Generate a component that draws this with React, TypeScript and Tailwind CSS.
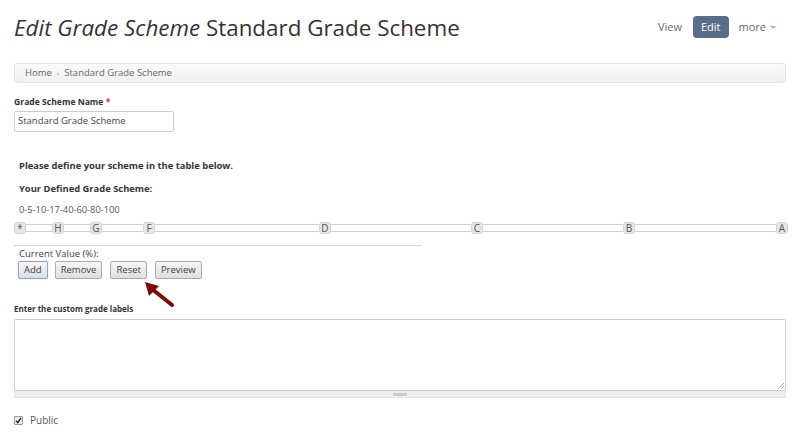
import React from 'react';

const font = { fontFamily: '"Open Sans", "Liberation Sans", sans-serif' };

const handles = [
    { label: '*', left: 14 },
    { label: 'H', left: 52 },
    { label: 'G', left: 90 },
    { label: 'F', left: 143 },
    { label: 'D', left: 319 },
    { label: 'C', left: 471 },
    { label: 'B', left: 623 },
    { label: 'A', left: 776 },
];

const Handle = ({ label }: { label: string }) => (
    <div className="w-[12px] h-[12px] shrink-0 rounded-[3px] border border-[#d3d3d3] bg-[#e6e6e6] flex items-center justify-center text-[10px] leading-none text-[#555]">
        {label}
    </div>
);

const Btn = ({ children, focused, className = '' }: { children: React.ReactNode; focused?: boolean; className?: string }) => (
    <button
        className={`h-[18px] px-[5px] text-[9.5px] leading-none text-[#444] rounded-[2px] bg-gradient-to-b from-[#f6f6f6] to-[#dedede] border ${
            focused ? 'border-[#7ea6dd] shadow-[0_0_1px_#8ab]' : 'border-[#aaa]'
        } ${className}`}
    >
        {children}
    </button>
);

export default function App() {
    // slider handle segments built from positions
    const segs: React.ReactNode[] = [];
    handles.forEach((h, i) => {
        segs.push(<Handle key={'h' + i} label={h.label} />);
        if (i < handles.length - 1) {
            const w = handles[i + 1].left - h.left - 12;
            segs.push(
                <div
                    key={'s' + i}
                    className="h-[8px] border-y border-[#cfcfcf] bg-white shrink-0"
                    style={{ width: w }}
                />
            );
        }
    });

    return (
        <div className="w-[800px] h-[434px] bg-white text-[#333] relative overflow-hidden" style={font}>
            {/* header */}
            <div className="flex items-center justify-between pl-[14px] pr-[24px] h-[56px]">
                <h1 className="text-[22.4px] leading-none text-[#333] pt-[1px]">
                    <em>Edit Grade Scheme</em> Standard Grade Scheme
                </h1>
                <div className="flex items-center text-[11px] pb-[2px]">
                    <span className="text-[#666] mr-[11px]">View</span>
                    <span className="bg-[#5b6b8c] text-white rounded-[4px] px-[8px] h-[22px] flex items-center">Edit</span>
                    <span className="text-[#666] ml-[10px]">more</span>
                    <span className="ml-[4px] border-x-[3px] border-x-transparent border-t-[3px] border-t-[#8ab4d8]" />
                </div>
            </div>

            {/* breadcrumb */}
            <div className="mx-[14px] mt-[7px] h-[20px] border border-[#e3e3e3] rounded-[3px] bg-gradient-to-b from-[#fafafa] to-[#f0f0f0] flex items-center pl-[10px] text-[9.5px] text-[#666]">
                <span>Home</span>
                <span className="mx-[5px] text-[8px] text-[#888]">›</span>
                <span>Standard Grade Scheme</span>
            </div>

            {/* name field */}
            <div className="px-[14px] mt-[13px]">
                <div className="text-[8.6px] font-bold text-[#333] leading-[12px]">
                    Grade Scheme Name <span className="text-[#c33]">*</span>
                </div>
                <div className="mt-[3px] w-[160px] h-[21px] border border-[#ccc] rounded-[2px] flex items-center px-[3px] text-[9.5px] text-[#444]">
                    Standard Grade Scheme
                </div>
            </div>

            {/* scheme section */}
            <div className="px-[19px] mt-[27px] text-[9.4px] font-bold text-[#333] leading-[14px]">
                Please define your scheme in the table below.
            </div>
            <div className="px-[19px] mt-[9px] text-[9.4px] font-bold text-[#333] leading-[14px]">
                Your Defined Grade Scheme:
            </div>
            <div className="px-[19px] mt-[8px] text-[9.3px] text-[#555] leading-[12px]">0-5-10-17-40-60-80-100</div>

            <div className="pl-[14px] mt-[6px] flex items-center h-[12px]">{segs}</div>

            <div className="ml-[14px] mt-[11px] w-[408px] border-t border-[#ddd]" />

            <div className="px-[19px] mt-[2px] text-[9.5px] text-[#444] leading-[12px]">Current Value (%):</div>
            <div className="pl-[18px] mt-[1px] flex items-center gap-[7px]">
                <Btn focused>Add</Btn>
                <Btn>Remove</Btn>
                <Btn className="ml-[1px]">Reset</Btn>
                <Btn className="ml-[1px]">Preview</Btn>
            </div>

            {/* arrow annotation */}
            <svg className="absolute left-[140px] top-[277px]" width="40" height="34" viewBox="0 0 40 34">
                <line x1="32" y1="28" x2="12" y2="12" stroke="#7d0a0a" strokeWidth="4" strokeLinecap="round" />
                <polygon points="5,5 19,9 9,19" fill="#7d0a0a" />
            </svg>

            {/* labels textarea */}
            <div className="px-[14px] mt-[24px]">
                <div className="text-[8px] font-bold text-[#333] leading-[12px]">Enter the custom grade labels</div>
                <div className="mt-[4px] relative h-[72px] border border-[#ccc] rounded-[2px] bg-white">
                    <svg className="absolute right-[1px] bottom-[1px]" width="7" height="7" viewBox="0 0 7 7">
                        <line x1="1" y1="7" x2="7" y2="1" stroke="#999" strokeWidth="0.8" />
                        <line x1="4" y1="7" x2="7" y2="4" stroke="#999" strokeWidth="0.8" />
                    </svg>
                </div>
                <div className="h-[7px] bg-[#eee] border-x border-b border-[#e2e2e2] flex items-center justify-center">
                    <div className="w-[14px] h-[3px] bg-[#ccc]" />
                </div>
            </div>

            {/* public */}
            <div className="px-[14px] mt-[15px] flex items-center gap-[7px]">
                <div className="w-[9px] h-[9px] border border-[#999] rounded-[1px] bg-[#eee] flex items-center justify-center">
                    <svg width="7" height="7" viewBox="0 0 7 7">
                        <path d="M1 3.8 L2.8 5.6 L6 1" fill="none" stroke="#222" strokeWidth="1.4" />
                    </svg>
                </div>
                <span className="text-[10px] text-[#555]">Public</span>
            </div>
        </div>
    );
}
